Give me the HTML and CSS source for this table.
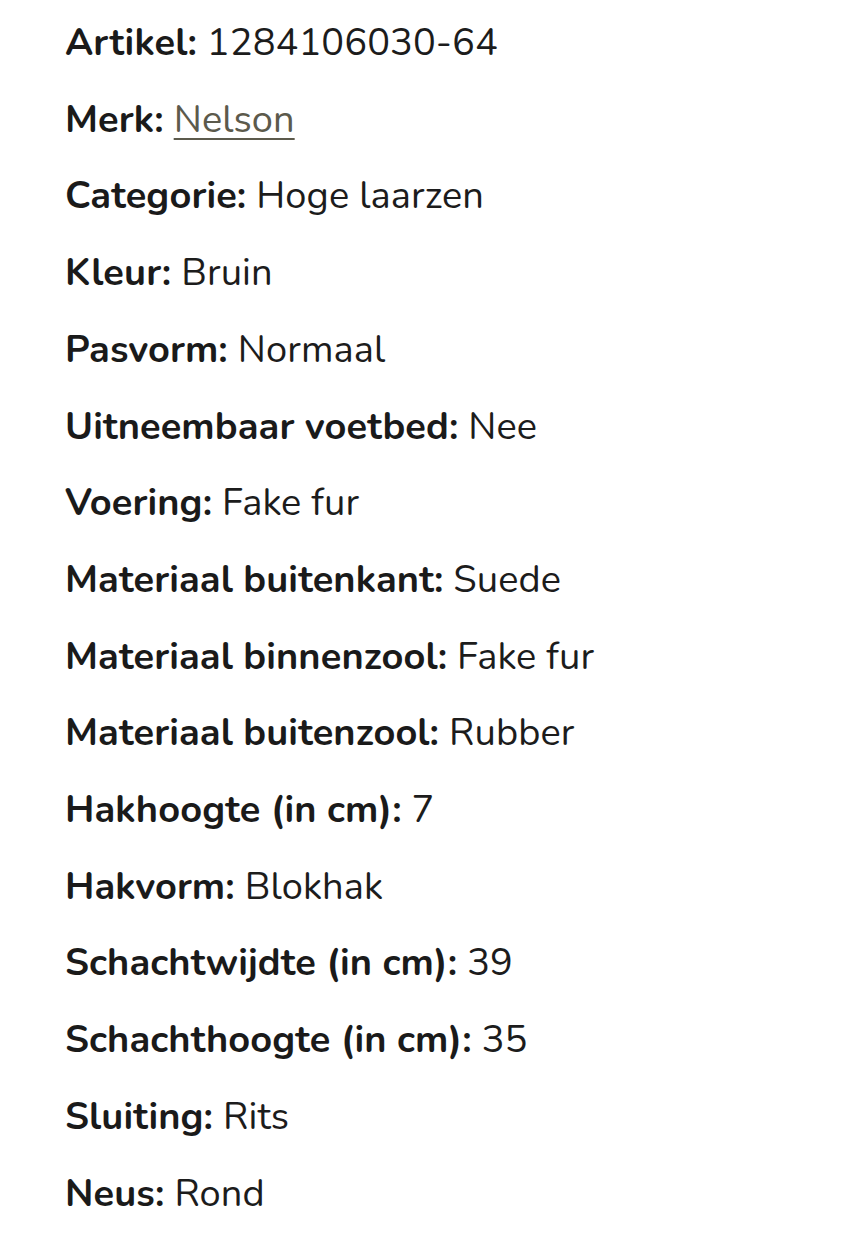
FILE: index.html
```html
<!DOCTYPE html>
<html lang="nl">
<head>
<meta charset="utf-8">
<link rel="stylesheet" href="styles.css">
</head>
<body>
<ul class="specs">
  <li><strong>Artikel:</strong> 1284106030-64</li>
  <li><strong>Merk:</strong> <a href="#">Nelson</a></li>
  <li><strong>Categorie:</strong> Hoge laarzen</li>
  <li><strong>Kleur:</strong> Bruin</li>
  <li><strong>Pasvorm:</strong> Normaal</li>
  <li><strong>Uitneembaar voetbed:</strong> Nee</li>
  <li><strong>Voering:</strong> Fake fur</li>
  <li><strong>Materiaal buitenkant:</strong> Suede</li>
  <li><strong>Materiaal binnenzool:</strong> Fake fur</li>
  <li><strong>Materiaal buitenzool:</strong> Rubber</li>
  <li><strong>Hakhoogte (in cm):</strong> 7</li>
  <li><strong>Hakvorm:</strong> Blokhak</li>
  <li><strong>Schachtwijdte (in cm):</strong> 39</li>
  <li><strong>Schachthoogte (in cm):</strong> 35</li>
  <li><strong>Sluiting:</strong> Rits</li>
  <li><strong>Neus:</strong> Rond</li>
</ul>
</body>
</html>
```

FILE: styles.css
```css
html, body {
  margin: 0;
  padding: 0;
  background: #ffffff;
}
body {
  font-family: "Nunito", "Lato", "Open Sans", sans-serif;
  color: #1c1c1c;
}
.specs {
  list-style: none;
  margin: 0;
  padding: 5px 0 0 65px;
  font-size: 38px;
  line-height: 76.7px;
  letter-spacing: 0.1px;
}
.specs li {
  white-space: nowrap;
}
.specs strong {
  font-weight: 700;
  color: #1a1a1a;
}
.specs a {
  color: #5c5a4c;
  text-decoration: underline;
  text-underline-offset: 6px;
  text-decoration-thickness: 2px;
}
```
